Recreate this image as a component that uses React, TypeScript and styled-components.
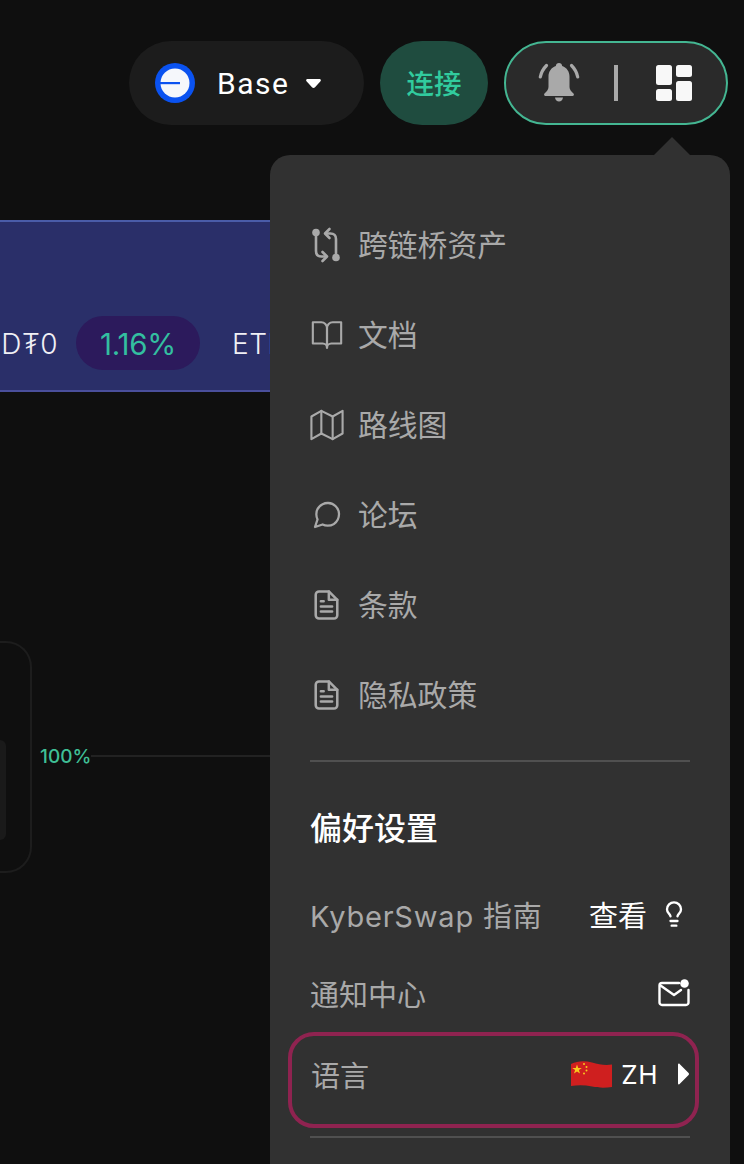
import React from "react";
import styled, { createGlobalStyle } from "styled-components";
import { FiBookOpen, FiMap, FiMessageCircle } from "react-icons/fi";
import { Lightbulb } from "lucide-react";

const CJK = `"Inter", "Noto Sans CJK SC", sans-serif`;

const Global = createGlobalStyle`
  html, body { margin: 0; padding: 0; background: #0f0f0f; }
  body { width: 744px; height: 1164px; overflow: hidden; font-family: ${CJK}; }
  * { box-sizing: border-box; }
`;

const Page = styled.div`
  position: relative;
  width: 744px;
  height: 1164px;
  overflow: hidden;
  background: #0f0f0f;
  display: flex;
  flex-direction: column;
`;

const Header = styled.header`
  display: flex;
  justify-content: flex-end;
  gap: 16px;
  padding: 41px 16px 0 0;
  height: 220px;
`;

const ChainPill = styled.div`
  width: 235px;
  height: 84px;
  border-radius: 42px;
  background: #1c1c1c;
  display: flex;
  align-items: center;
  padding-left: 26px;
  color: #fff;
`;

const ChainName = styled.span`
  font-family: "Roboto", sans-serif;
  font-size: 30px;
  font-weight: 400;
  letter-spacing: 1.5px;
  margin-left: 22px;
`;

const DownCaret = styled.svg`
  margin-left: 17px;
`;

const ConnectButton = styled.div`
  width: 108px;
  height: 84px;
  border-radius: 42px;
  background: #1f4c3f;
  color: #31cb9e;
  font-size: 27.5px;
  font-weight: 500;
  display: flex;
  align-items: center;
  justify-content: center;
  padding-bottom: 2px;
`;

const IconPill = styled.div`
  width: 224px;
  height: 84px;
  border-radius: 42px;
  border: 2px solid #44b692;
  background: #2a2a2a;
  display: flex;
  align-items: center;
  padding-left: 32px;
`;

const PillDivider = styled.span`
  width: 4px;
  height: 36px;
  background: #a9a9a9;
  margin: 0 38px 0 34px;
`;

const Banner = styled.section`
  width: 700px;
  height: 172px;
  background: #2a2f69;
  border-top: 2px solid #4a5ca8;
  border-bottom: 2px solid #4a4f9c;
  display: flex;
  align-items: flex-end;
  overflow: hidden;
  padding-bottom: 20px;
`;

const Ticker = styled.div`
  display: flex;
  align-items: center;
  height: 54px;
  color: #f0f0f5;
  font-size: 28px;
  font-weight: 300;
  white-space: nowrap;
`;

const Symbol = styled.span<{ $cut?: number }>`
  margin-left: ${(p) => -(p.$cut ?? 0)}px;
  padding-top: 2px;
  letter-spacing: 0.5px;
`;

const Rate = styled.span`
  width: 124px;
  height: 54px;
  margin: 0 32px 0 18px;
  padding-top: 2px;
  border-radius: 27px;
  background: #2c1a5c;
  color: #33bfa0;
  font-size: 29.5px;
  font-weight: 400;
  letter-spacing: -0.2px;
  display: flex;
  align-items: center;
  justify-content: center;
`;

const ChartRow = styled.section`
  margin-top: 249px;
  height: 232px;
  display: flex;
  align-items: center;
`;

const ChartCard = styled.div`
  width: 32px;
  height: 232px;
  border: 2px solid #1d1d1d;
  border-left: none;
  border-radius: 0 26px 26px 0;
  display: flex;
  align-items: center;
`;

const ChartInner = styled.div`
  width: 6px;
  height: 100px;
  background: #1a1a1a;
  border-radius: 0 8px 8px 0;
  margin-top: 66px;
`;

const Percent = styled.span`
  margin: -1px 0 0 8px;
  color: #3fbf95;
  font-size: 19px;
  font-weight: 500;
`;

const ChartLine = styled.span`
  width: 200px;
  height: 2px;
  margin-top: -2px;
  background: #222;
`;

const Menu = styled.nav`
  position: absolute;
  left: 270px;
  top: 155px;
  width: 460px;
  height: 1040px;
  background: #313131;
  border-radius: 20px;
  padding: 45px 40px 0;
  display: flex;
  flex-direction: column;
`;

const MenuArrow = styled.span`
  position: absolute;
  top: -18px;
  left: 383px;
  width: 0;
  height: 0;
  border-left: 19px solid transparent;
  border-right: 19px solid transparent;
  border-bottom: 19px solid #313131;
`;

const LinkRow = styled.div`
  height: 90px;
  display: flex;
  align-items: center;
  gap: 15px;
  color: #a9a9a9;
  font-size: 29.8px;
  svg { flex: none; }
`;

const LinkLabel = styled.span`
  padding-bottom: 4px;
`;

const IconSlot = styled.span`
  width: 33px;
  display: flex;
  justify-content: center;
  color: #a9a9a9;
`;

const Rule = styled.div<{ $top: number }>`
  height: 2px;
  background: #505050;
  margin-top: ${(p) => p.$top}px;
  flex: none;
`;

const SectionTitle = styled.div`
  margin-top: 47px;
  height: 40px;
  line-height: 40px;
  color: #fff;
  font-size: 32px;
  font-weight: 500;
`;

const PrefRow = styled.div<{ $top?: number }>`
  height: 79px;
  margin-top: ${(p) => p.$top ?? 0}px;
  display: flex;
  align-items: center;
  justify-content: space-between;
  color: #a9a9a9;
  font-size: 29px;
  flex: none;
`;

const GuideLabel = styled.span`
  letter-spacing: 0.8px;
`;

const RowValue = styled.span`
  display: flex;
  align-items: center;
  color: #fff;
  gap: 13px;
`;

const ViewText = styled.span`
  font-weight: 400;
  font-size: 29px;
`;

const BulbSlot = styled.span`
  display: flex;
  margin-right: 2px;
`;

const FocusBox = styled.div`
  margin: 0 -9px 0 -22px;
  padding: 0 6px 12px 19px;
  height: 96px;
  border: 4px solid #8f2350;
  border-radius: 26px;
  display: flex;
  align-items: center;
  justify-content: space-between;
  color: #a9a9a9;
  font-size: 29px;
  flex: none;
`;

const LangCode = styled.span`
  font-size: 26px;
  margin: 0 6px 0 -4px;
  letter-spacing: 0.5px;
`;

const BaseLogo = () => (
  <svg width="40" height="40" viewBox="0 0 40 40" aria-hidden="true">
    <circle cx="20" cy="20" r="20" fill="#0a52f0" />
    <circle cx="20" cy="20" r="14.5" fill="#f5f7fb" />
    <rect x="5" y="19" width="20" height="2.2" fill="#0a52f0" />
  </svg>
);

const Bell = () => (
  <svg width="42" height="40" viewBox="0 0 42 40" fill="none" aria-hidden="true">
    <path
      d="M21 0c1.800 0 3 1.200 3.200 3C29 4.600 31.500 9 31.500 13.500V24c0 2.500 1.800 4.600 4 6.600.9.900.4 2.400-1 2.400h-27c-1.400 0-1.900-1.500-1-2.400 2.200-2 4-4.100 4-6.600V13.500C10.500 9 13 4.600 17.800 3 18 1.200 19.200 0 21 0Z"
      fill="#a9a9a9"
    />
    <path d="M17 34.500h8c-.3 2.500-2 4-4 4s-3.700-1.500-4-4Z" fill="#a9a9a9" />
    <path d="M8.500 2.500C5.500 5.500 3.200 9.500 2.300 14" stroke="#a9a9a9" strokeWidth="3.200" strokeLinecap="round" />
    <path d="M33.500 2.500C36.500 5.500 38.800 9.500 39.700 14" stroke="#a9a9a9" strokeWidth="3.200" strokeLinecap="round" />
  </svg>
);

const Dashboard = () => (
  <svg width="36" height="36" viewBox="0 0 36 36" fill="#f8f8f8" aria-hidden="true" style={{ display: "block" }}>
    <rect x="0" y="0" width="16" height="20" rx="2.500" />
    <rect x="20" y="0" width="16" height="12" rx="2.500" />
    <rect x="0" y="24" width="16" height="12" rx="2.500" />
    <rect x="20" y="16" width="16" height="20" rx="2.500" />
  </svg>
);

const BridgeIcon = () => (
  <svg width="33" height="36" viewBox="0 0 33 36" fill="none" stroke="#a9a9a9" strokeWidth="2.600" strokeLinecap="round" strokeLinejoin="round" aria-hidden="true">
    <circle cx="6" cy="5.500" r="3.800" fill="#a9a9a9" stroke="none" />
    <circle cx="26" cy="30.500" r="3.800" fill="#a9a9a9" stroke="none" />
    <path d="M6 9v15c0 3.500 2 5.500 5.500 5.500H16" />
    <path d="M12.500 34l4.500-4.500-4.500-4.500" />
    <path d="M26 27V12c0-3.500-2-5.500-5.500-5.500H16" />
    <path d="M19.500 2L15 6.500l4.500 4.500" />
  </svg>
);

const DocIcon = () => (
  <svg width="25" height="30" viewBox="0 0 26 32" fill="none" stroke="#a9a9a9" strokeWidth="2.700" strokeLinecap="round" strokeLinejoin="round" aria-hidden="true">
    <path d="M15.500 1.500H5A3.500 3.500 0 0 0 1.500 5v22A3.500 3.500 0 0 0 5 30.500h16a3.500 3.500 0 0 0 3.500-3.500V10.500Z" />
    <path d="M15.500 1.500v9h9" />
    <path d="M7 12h3M7 17.500h12M7 23h12" />
  </svg>
);

const MailDot = () => (
  <svg width="32" height="28" viewBox="0 0 32 28" fill="none" aria-hidden="true">
    <path d="M21 4H4a2.500 2.500 0 0 0-2.500 2.500v17A2.500 2.500 0 0 0 4 26h24a2.500 2.500 0 0 0 2.500-2.500V11" stroke="#fff" strokeWidth="2.400" strokeLinecap="round" />
    <path d="M2.500 6.500 16 16l7-5" stroke="#fff" strokeWidth="2.400" strokeLinecap="round" strokeLinejoin="round" />
    <circle cx="26.500" cy="4.500" r="4.300" fill="#fff" />
  </svg>
);

const Flag = () => (
  <svg width="41" height="27" viewBox="0 0 41 27" aria-hidden="true">
    <path d="M0 3C7 -0.500 14 -0.500 21 1.500s13 3 20 2V26c-7 1-13 1-20-.5S7 24 0 25Z" fill="#cf1f1f" />
    <polygon points="6,3.500 7.200,7 10.800,7 7.900,9.100 9,12.500 6,10.400 3,12.500 4.100,9.100 1.200,7 4.800,7" fill="#f8c81e" />
    <circle cx="13" cy="3" r="1" fill="#f8c81e" />
    <circle cx="15.500" cy="6" r="1" fill="#f8c81e" />
    <circle cx="15.500" cy="9.500" r="1" fill="#f8c81e" />
    <circle cx="13" cy="12.500" r="1" fill="#f8c81e" />
  </svg>
);

const links: { label: string; icon: React.ReactNode }[] = [
  { label: "跨链桥资产", icon: <BridgeIcon /> },
  { label: "文档", icon: <FiBookOpen size={34} strokeWidth={1.5} /> },
  { label: "路线图", icon: <FiMap size={34} strokeWidth={1.5} /> },
  { label: "论坛", icon: <FiMessageCircle size={32} strokeWidth={1.7} /> },
  { label: "条款", icon: <DocIcon /> },
  { label: "隐私政策", icon: <DocIcon /> },
];

export default function App() {
  return (
    <Page>
      <Global />
      <Header>
        <ChainPill>
          <BaseLogo />
          <ChainName>Base</ChainName>
          <DownCaret width="15" height="9" viewBox="0 0 15 9" aria-hidden="true">
            <path d="M1.500 0h12c1.200 0 1.800 1.300 1 2.200L9 8.200c-.8.900-2.200.900-3 0L.5 2.200C-.3 1.300.3 0 1.500 0Z" fill="#fff" />
          </DownCaret>
        </ChainPill>
        <ConnectButton>连接</ConnectButton>
        <IconPill>
          <Bell />
          <PillDivider />
          <Dashboard />
        </IconPill>
      </Header>
      <Banner>
        <Ticker>
          <Symbol $cut={38}>USD₮0</Symbol>
          <Rate>1.16%</Rate>
          <Symbol>ETH</Symbol>
        </Ticker>
      </Banner>
      <ChartRow>
        <ChartCard>
          <ChartInner />
        </ChartCard>
        <Percent>100%</Percent>
        <ChartLine />
      </ChartRow>
      <Menu>
        <MenuArrow />
        {links.map((l) => (
          <LinkRow key={l.label}>
            <IconSlot>{l.icon}</IconSlot>
            <LinkLabel>{l.label}</LinkLabel>
          </LinkRow>
        ))}
        <Rule $top={20} />
        <SectionTitle>偏好设置</SectionTitle>
        <PrefRow $top={25}>
          <GuideLabel>KyberSwap 指南</GuideLabel>
          <RowValue>
            <ViewText>查看</ViewText>
            <BulbSlot>
              <Lightbulb size={28} strokeWidth={2} />
            </BulbSlot>
          </RowValue>
        </PrefRow>
        <PrefRow>
          <span>通知中心</span>
          <RowValue>
            <MailDot />
          </RowValue>
        </PrefRow>
        <FocusBox>
          <span>语言</span>
          <RowValue>
            <Flag />
            <LangCode>ZH</LangCode>
            <svg width="12" height="22" viewBox="0 0 12 22" aria-hidden="true">
              <path d="M1 1.500v19c0 .8 1 1.200 1.600.6l9-9c.5-.6.500-1.600 0-2.200l-9-9C2 .3 1 .7 1 1.500Z" fill="#fff" />
            </svg>
          </RowValue>
        </FocusBox>
        <Rule $top={8} />
      </Menu>
    </Page>
  );
}
